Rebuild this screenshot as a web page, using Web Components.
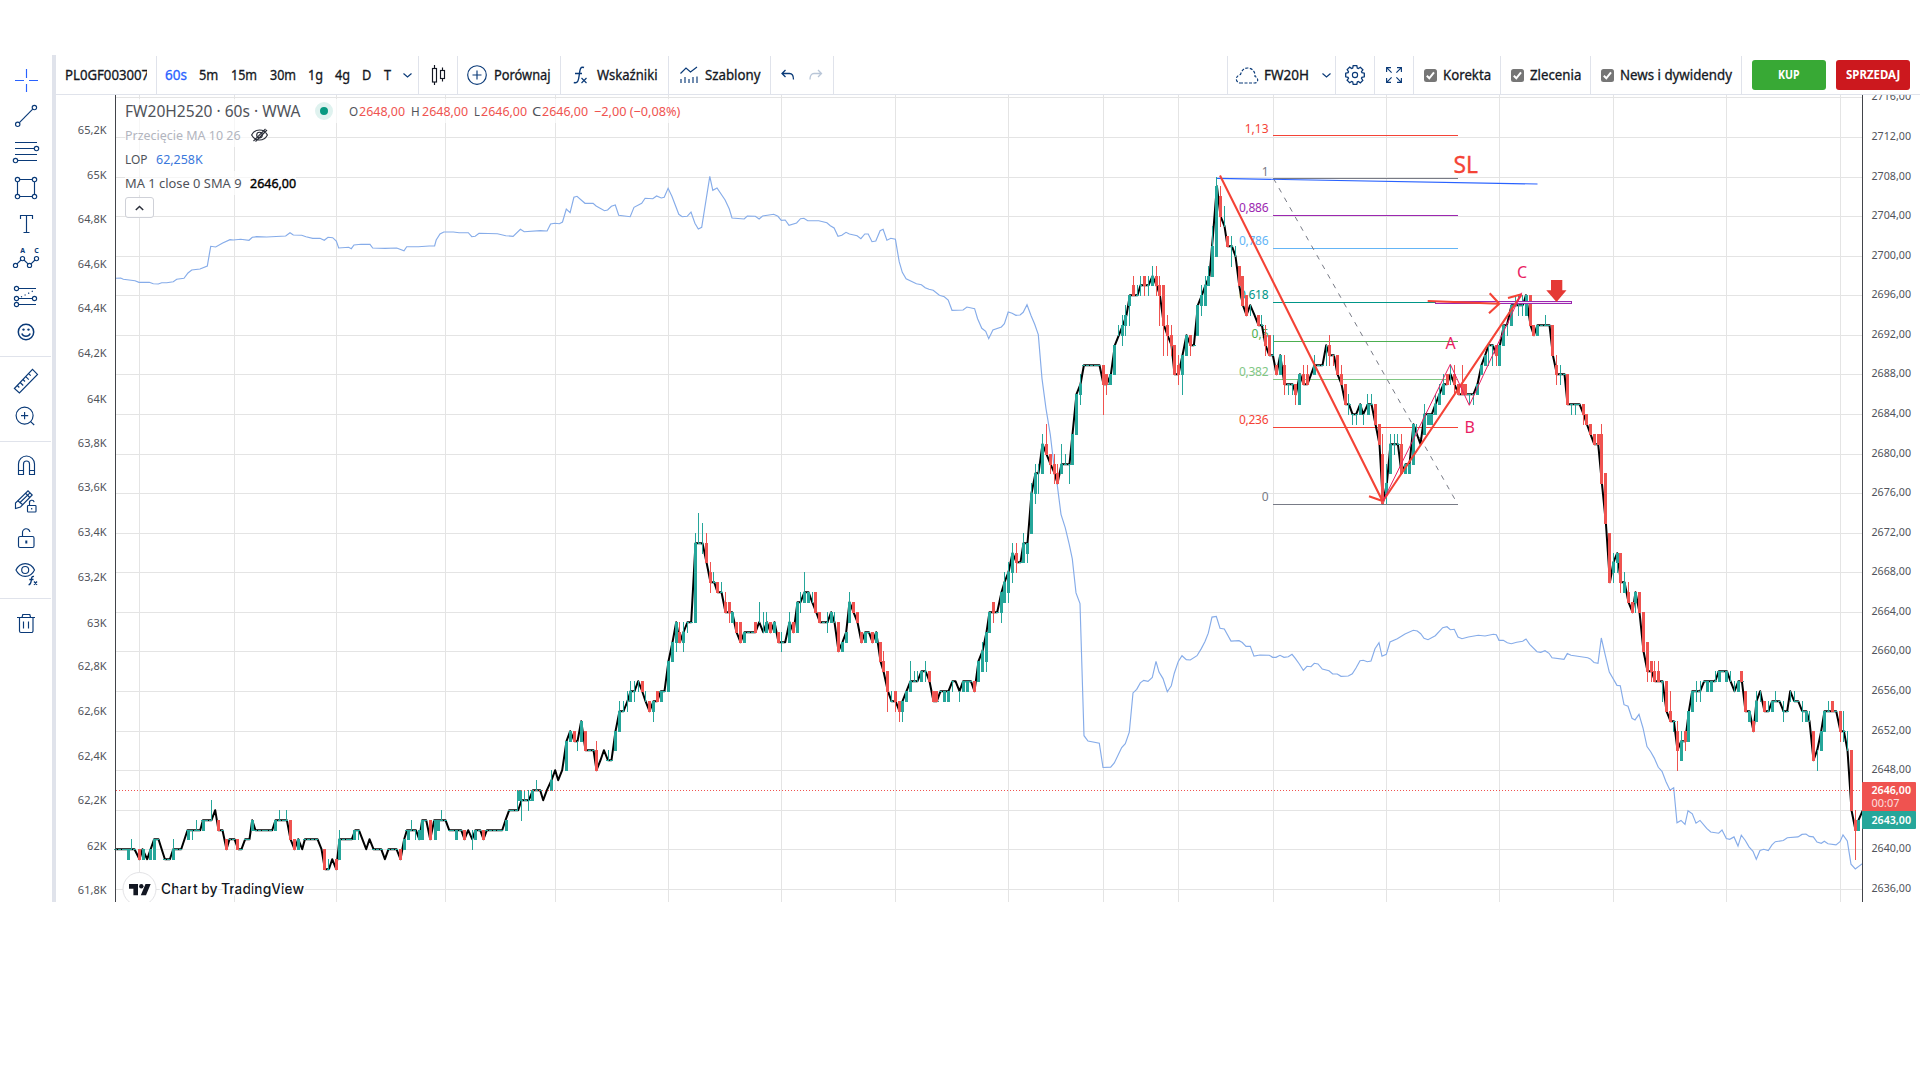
<!DOCTYPE html>
<html lang="pl">
<head>
<meta charset="utf-8">
<title>FW20H2520</title>
<style>
    html, body { margin: 0; padding: 0; background: #fff; }
    body { font-family: "Noto Sans", "Open Sans", sans-serif; color: #131722; overflow: hidden; }
</style>
</head>
<body>
<trading-app></trading-app>

<script>
function define(name, html, setup) {
    const template = document.createElement('template');
    template.innerHTML = html;
    customElements.define(name, class extends HTMLElement {
        constructor() {
            super();
            this.attachShadow({ mode: 'open' });
            this.shadowRoot.appendChild(template.content.cloneNode(true));
        }

        connectedCallback() {
            if (setup) setup.call(this, this.shadowRoot);
        }
    });
}

// Label squeezed or stretched to the width in its "w" attribute
define('ui-label', `
    <style>
        :host { display: block; flex: none; white-space: nowrap; line-height: 20px; height: 20px; }
        span { display: inline-block; transform-origin: 0 50%; }
    </style>
    <span><slot></slot></span>
`, function (root) {
    const w = parseFloat(this.getAttribute('w'));
    const span = root.querySelector('span');
    this.style.width = w + 'px';
    this.style.marginLeft = (this.getAttribute('gap') || 0) + 'px';
    span.style.transform = `scaleX(${w / span.offsetWidth})`;
});

const RAIL_ICONS = {
    cross: '<path d="M18.5 7v9M18.5 22v8M7 18.5h9M21 18.5h9" stroke="#2962ff"/>',
    line: '<path d="M11.4 24.6 24.7 11.2"/><circle cx="9.7" cy="26.3" r="2.2"/><circle cx="26.4" cy="9.5" r="2.2"/>',
    fib: '<path d="M7 8.5h22M7 14.5h19M7 20.5h22M10 26.5h19"/><circle cx="28.5" cy="14.5" r="2.2"/><circle cx="7.5" cy="26.5" r="2.2"/>',
    rect: '<path d="M12 9.5h12M12 26.5h12M9.5 12v12M26.5 12v12"/><circle cx="9.5" cy="9.5" r="2.2"/><circle cx="26.5" cy="9.5" r="2.2"/><circle cx="9.5" cy="26.5" r="2.2"/><circle cx="26.5" cy="26.5" r="2.2"/>',
    text: '<path d="M12.5 13V9.5h12V13M18.5 9.5v17M15.5 26.5h6"/>',
    abc: '<path d="M9 21.8l4-3.8M16 18l4 3.8M23 21.8l4-3.8"/><circle cx="7.5" cy="23.4" r="2.1"/><circle cx="14.5" cy="16.6" r="2.1"/><circle cx="21.5" cy="23.4" r="2.1"/><circle cx="28.5" cy="16.6" r="2.1"/><text x="12.3" y="10.8">A</text><text x="26.2" y="10.8">C</text>',
    forecast: '<path d="M11 10.5h17M11 20.5h13M11 26.5h17"/><path d="M13 19l14-7" stroke-dasharray="1.2 2.8"/><circle cx="8.5" cy="10.5" r="2.1"/><circle cx="8.5" cy="20.5" r="2.1"/><circle cx="26.5" cy="20.5" r="2.1"/><circle cx="8.5" cy="26.5" r="2.1"/>',
    smile: '<circle cx="18" cy="18" r="7.7" stroke-width="1.5"/><path d="M13.8 19.5a4.6 4.6 0 0 0 8.4 0" stroke-width="1.5"/><circle cx="15.5" cy="15.6" r="1.2" fill="#0a3a78" stroke="none"/><circle cx="20.5" cy="15.6" r="1.2" fill="#0a3a78" stroke="none"/>',
    ruler: '<path d="M6.4 25.5 24.5 6.4l5 5L11.4 30zM9.3 22.5l2 2M12.2 19.5l3 3M15 16.5l2 2M17.8 13.6l3 3M20.7 10.6l2 2"/>',
    zoom: '<circle cx="16.6" cy="16.6" r="8.5"/><path d="M22.6 22.6l3.6 3.4M16.6 13v7.2M13 16.6h7.2"/>',
    magnet: '<path d="M10.5 26.5V16a8 8 0 0 1 16 0v10.5h-5V16a3 3 0 0 0-6 0v10.5zM10.5 22.5h5M21.5 22.5h5"/>',
    pencil: '<path d="M7.5 24.5v-5.5L20 6.8l4.2 4.2L12.5 23zM9.8 16.8l5 4M11.5 19 22 8.8M17.5 9.2l4.3 4.3M7.5 24.5l5-1.5"/><rect x="19.5" y="21.5" width="8.5" height="6.5" rx=".8"/><path d="M21.5 21.5V19a2.3 2.3 0 0 1 4.6-.8M23.7 24v1.6"/>',
    lock: '<rect x="10.5" y="16.5" width="15.5" height="11" rx="1.5"/><path d="M14.5 16.5V13a3.7 3.7 0 0 1 7.4-1"/><path d="M18.3 20.5v3" stroke-width="2"/>',
    eye: '<path d="M8 14c4-8.5 14.5-8.5 18.5 0-4 8.5-14.5 8.5-18.5 0z"/><circle cx="17.2" cy="14" r="3.5"/><path d="M26 20.5c-2.6-.6-2.4 2-2.8 4.5s-.6 4-2.7 3.7M21.3 23.5h4.2M26 25.5l3 3.2M29 25.5l-3 3.2" stroke-width="1.3"/>',
    trash: '<path d="M9 12.5h18M11.5 12.5V26a1.5 1.5 0 0 0 1.5 1.5h10.5A1.5 1.5 0 0 0 25 26V12.5M14 12.5l.8-3h7l.8 3M15.5 16.5v7M20.5 16.5v7"/>'
};

define('rail-button', `
    <style>
        :host { display: block; height: 36px; padding-left: 8px; }
        svg { display: block; width: 36px; height: 36px; fill: none; stroke: #0a3a78; stroke-width: 1.15; }
        text { font: bold 7px "Noto Sans", sans-serif; fill: #0a3a78; stroke: none; }
    </style>
    <svg viewBox="0 0 36 36"></svg>
`, function (root) {
    root.querySelector('svg').innerHTML = RAIL_ICONS[this.getAttribute('icon')];
});

define('tool-rail', `
    <style>
        :host { display: block; box-sizing: border-box; width: 56px; border-right: 4px solid #e0e3eb; padding-top: 7px; }
        hr { margin: 6px 1px 6px 0; border: 0; height: 1px; background: #e0e3eb; }
    </style>
    <rail-button icon="cross"></rail-button>
    <rail-button icon="line"></rail-button>
    <rail-button icon="fib"></rail-button>
    <rail-button icon="rect"></rail-button>
    <rail-button icon="text"></rail-button>
    <rail-button icon="abc"></rail-button>
    <rail-button icon="forecast"></rail-button>
    <rail-button icon="smile"></rail-button>
    <hr>
    <rail-button icon="ruler"></rail-button>
    <rail-button icon="zoom"></rail-button>
    <hr>
    <rail-button icon="magnet"></rail-button>
    <rail-button icon="pencil"></rail-button>
    <rail-button icon="lock"></rail-button>
    <rail-button icon="eye"></rail-button>
    <hr>
    <rail-button icon="trash"></rail-button>
`);

// One cell of the top bar, closed by a separator on its right
define('bar-cell', `
    <style>
        :host { display: flex; align-items: center; box-sizing: border-box; flex: none; height: 38px; margin-top: 1px; border-right: 1px solid #e0e3eb; overflow: hidden; }
    </style>
    <slot></slot>
`, function () {
    this.style.width = this.getAttribute('w') + 'px';
    this.style.paddingLeft = (this.getAttribute('pad') || 0) + 'px';
});

define('check-box', `
    <style>
        :host { display: block; flex: none; width: 13px; height: 13px; border-radius: 2.5px; background: #767676; }
        svg { display: block; }
    </style>
    <svg width="13" height="13" viewBox="0 0 13 13"><path d="M2.8 6.8 5.3 9.3 10 3.3" fill="none" stroke="#fff" stroke-width="2"/></svg>
`);

define('order-button', `
    <style>
        :host { display: flex; flex: none; width: 74px; height: 30px; align-items: center; justify-content: center; border-radius: 3px; color: #fff; font-size: 12.5px; font-weight: 700; }
        :host([side="buy"]) { background: #38a935; margin-left: 10px; }
        :host([side="sell"]) { background: #cc181e; margin-left: 10px; }
    </style>
    <slot></slot>
`);

define('top-bar', `
    <style>
        :host { display: flex; height: 39px; border-bottom: 1px solid #e0e3eb; font-size: 13.5px; -webkit-text-stroke: .3px currentColor; }
        svg { display: block; flex: none; fill: none; stroke: #0a3a78; stroke-width: 1.15; overflow: visible; }
        .clip { width: 82px; overflow: hidden; height: 20px; }
        .spacer { flex: 1; border: 0; }
        .active { color: #2962ff; }
        .orders { display: flex; align-items: center; width: 178px; padding-top: 1px; }
        order-button { -webkit-text-stroke: 0; }
    </style>
    <bar-cell w="101" pad="9"><div class="clip"><ui-label w="84">PL0GF003007</ui-label></div></bar-cell>
    <bar-cell w="262" pad="8">
        <ui-label class="active" w="22">60s</ui-label>
        <ui-label w="19" gap="12">5m</ui-label>
        <ui-label w="26" gap="13">15m</ui-label>
        <ui-label w="26" gap="12.5">30m</ui-label>
        <ui-label w="15" gap="12">1g</ui-label>
        <ui-label w="15" gap="12">4g</ui-label>
        <ui-label w="9.5" gap="12.5">D</ui-label>
        <ui-label w="7.5" gap="12">T</ui-label>
        <svg style="margin-left:12px" width="9" height="5"><path d="M.5.5 4.5 4l4-3.5"/></svg>
    </bar-cell>
    <bar-cell w="39" pad="12">
        <svg width="15" height="20" style="stroke:#131722"><path d="M3.5 0v3M3.5 17v3M11.5 2.5v3M11.5 13.5v3"/><rect x="1.5" y="3.5" width="4" height="13.5"/><rect x="9.5" y="5.5" width="4" height="8"/></svg>
    </bar-cell>
    <bar-cell w="103" pad="9">
        <svg width="20" height="20"><circle cx="10" cy="10" r="9.3"/><path d="M10 5.5v9M5.5 10h9"/></svg>
        <ui-label w="57" gap="7">Porównaj</ui-label>
    </bar-cell>
    <bar-cell w="108" pad="12">
        <svg width="14" height="18"><path d="M11 1.5C7 0 7 4 6.3 8.5 5.6 13 5.5 18 .8 16.5M2 7.5h7" stroke-width="1.4"/><path d="M8.5 12l5 5M13.5 12l-5 5"/></svg>
        <ui-label w="61" gap="9.5">Wskaźniki</ui-label>
    </bar-cell>
    <bar-cell w="102" pad="11">
        <svg width="18" height="18"><path d="M.5 7.5 6 2l4.500 4L17 1M1 17v-4M5 17v-6M9 17v-4M13 17v-6M17 17v-6.5"/></svg>
        <ui-label w="56" gap="6.5">Szablony</ui-label>
    </bar-cell>
    <bar-cell w="63" pad="10">
        <svg width="13" height="10"><path d="M4.5 0 1 3.5 4.5 7M1 3.5h7.5c2.5 0 4 2 4 6" stroke-width="1.3"/></svg>
        <svg width="13" height="10" style="margin-left:15px;stroke:#b9c6d8"><path d="M9 0l3.5 3.5L9 7M12.5 3.5H5c-2.5 0-4 2-4 6" stroke-width="1.3"/></svg>
    </bar-cell>
    <bar-cell class="spacer" w="393" style="border-right:1px solid #e0e3eb"></bar-cell>
    <bar-cell w="108" pad="7">
        <svg width="24" height="17"><path d="M5 16h14.5c4 0 4.5-5 .5-6.5C20.5 4.5 17 1 12.500 1 8.500 1 6.5 4 5.5 7.500 0 9 0 15 5 16z" stroke-dasharray="3 1.5"/></svg>
        <ui-label w="45" gap="5">FW20H</ui-label>
        <svg style="margin-left:13px" width="9" height="5"><path d="M.5.5 4.5 4l4-3.5"/></svg>
    </bar-cell>
    <bar-cell w="39" pad="9">
        <svg width="20" height="20" viewBox="0 0 20 20"><path d="M7.7 3.1 8.2.7h3.6l.5 2.4 1 .4 2.1-1.3 2.5 2.5-1.4 2 .5 1 2.3.5v3.6l-2.4.5-.4 1 1.3 2.1-2.5 2.5-2-1.4-1 .5-.5 2.3H8.2l-.5-2.4-1-.4-2.1 1.3-2.5-2.5 1.4-2-.5-1-2.3-.5V8.2l2.4-.5.4-1-1.3-2.1 2.5-2.5 2 1.4z" stroke-width="1.3"/><circle cx="10" cy="10" r="2.6"/></svg>
    </bar-cell>
    <bar-cell w="39" pad="11">
        <svg width="16" height="16"><path d="M.6 5V.6H5M.6.6l5 5M11 .6h4.400V5M15.4.6l-5 5M.6 11v4.400H5M.6 15.4l5-5M15.4 11v4.400H11M15.4 15.4l-5-5"/></svg>
    </bar-cell>
    <bar-cell w="87" pad="10"><check-box></check-box><ui-label w="48" gap="5.5">Korekta</ui-label></bar-cell>
    <bar-cell w="90" pad="10"><check-box></check-box><ui-label w="51" gap="5.5">Zlecenia</ui-label></bar-cell>
    <bar-cell w="151" pad="10"><check-box></check-box><ui-label w="112" gap="5.5">News i dywidendy</ui-label></bar-cell>
    <div class="orders">
        <order-button side="buy"><ui-label w="22">KUP</ui-label></order-button>
        <order-button side="sell"><ui-label w="54">SPRZEDAJ</ui-label></order-button>
    </div>
`);

define('chart-legend', `
    <style>
        :host { display: block; font-size: 13px; color: #50535a; }
        .row { display: flex; align-items: center; height: 24px; width: max-content; background: rgba(255, 255, 255, .65); }
        .title { font-size: 16px; }
        .dot { width: 8px; height: 8px; border-radius: 50%; background: #089981; border: 5px solid #dff2ef; margin: 0 16px 0 15px; }
        .red { color: #ef5350; }
        .off { color: #b2b5be; }
        .blue { color: #3a78dc; }
        .val { color: #000; -webkit-text-stroke: .4px #000; }
        svg { display: block; fill: none; stroke: #2a2e39; stroke-width: 1.15; }
        button { display: flex; align-items: center; justify-content: center; width: 29px; height: 21px; margin: 2px 0 0; padding: 0; background: rgba(255, 255, 255, .8); border: 1px solid #cfd1d8; border-radius: 3px; }
    </style>
    <div class="row"><ui-label class="title" w="175">FW20H2520 · 60s · WWA</ui-label><span class="dot"></span>
        <ui-label w="9">O</ui-label><ui-label class="red" w="46" gap="1">2648,00</ui-label>
        <ui-label w="9" gap="6">H</ui-label><ui-label class="red" w="46" gap="1.5">2648,00</ui-label>
        <ui-label w="6" gap="6.5">L</ui-label><ui-label class="red" w="46" gap=".5">2646,00</ui-label>
        <ui-label w="9" gap="5.5">C</ui-label><ui-label class="red" w="46" gap=".5">2646,00</ui-label>
        <ui-label class="red" w="86" gap="6">−2,00 (−0,08%)</ui-label></div>
    <div class="row off"><ui-label w="116">Przecięcie MA 10 26</ui-label>
        <svg style="margin-left:10px" width="17" height="14"><path d="M.6 7C4 .3 13 .3 16.4 7 13 13.7 4 13.7.6 7zM2.5 13 14.5 1M4.5 13.5 16 2"/><circle cx="8.5" cy="7" r="2.8"/></svg></div>
    <div class="row"><ui-label w="23">LOP</ui-label><ui-label class="blue" w="47" gap="8">62,258K</ui-label></div>
    <div class="row"><ui-label w="117">MA 1 close 0 SMA 9</ui-label><ui-label class="val" w="46" gap="8">2646,00</ui-label></div>
    <button><svg width="9" height="6" style="stroke-width:1.5"><path d="M.8 5 4.5 1.5 8.2 5"/></svg></button>
`);

// Chart runs: x is in thirds of a pixel from x0, prices are points above 2600.
// close: x,price - up/down: x,top,bottom of the body - upWick/downWick: x,high,low
const RUNS = [
    {
        x0: 100,
        close: '46,40 103,40 118,39 127,40 141,39 162,41 175,41 194,39 209,39 219,40 243,40 262,42 300,42 308,43 334,43 345,44 355,42 367,42 379,40 388,41 403,41 414,40 424,40 435,41 448,41 456,43 466,42 516,42 526,43 560,43 571,41 583,40 594,41 606,40 614,41 652,41 664,40 674,38 686,38 696,39 708,38 718,41 755,41 765,42 776,42 798,40 808,41 820,40 843,40 854,39 865,40 889,40 901,39 912,41 920,42 947,42 957,41 966,43 978,43 990,41 1002,43 1036,43 1047,42 1083,42 1093,41 1104,42 1116,41 1126,42 1140,42 1150,41 1160,42 1206,42 1216,43 1227,44 1254,44 1264,45 1286,45',
        up: '85,40,39 130,40,39 152,40,39 163,41,39 220,40,39 266,42,41 310,43,42 457,43,42 526,43,42 595,41,40 718,41,39 764,42,41 912,41,40 924,42,41 957,42,41 966,43,41 1005,43,41 1015,43,42 1069,42,41 1126,42,41 1219,43,42',
        down: '118,40,39 355,43,42 379,41,40 412,41,40 571,43,41 583,41,40 673,40,38 709,39,38 901,40,39 991,43,41 1093,42,41 1150,42,41',
        upWick: '94,41,40 220,41,39 277,42,41 289,43,42 334,45,43 538,44,43 559,44,43 685,39,38 719,42,39 776,42,41 934,43,42 946,42,41 1024,44,43 1117,42,40 1252,46,44 1264,46,43 1273,46,45 1285,46,44'
    },
    {
        x0: 520,
        close: '38,46 60,46 69,45 80,46 94,47 105,48 114,47 126,48 139,51 150,52 163,51 172,51 183,53 196,50 220,50 229,48 241,49 251,50 263,49 274,49 286,52 298,54 310,54 322,55 331,56 343,56 354,57 366,56 376,55 388,54 400,55 411,55 422,56 433,56 445,59 457,61 468,63 479,61 490,62 502,63 513,63 526,71 547,71 559,69 571,67 582,67 592,66 604,66 616,64 636,64 649,62 661,61 673,62 706,62 717,63 729,62 740,63 751,62 763,63 775,61 795,61 808,63 820,62 832,65 841,65 853,66 865,66 876,65 888,64 899,63 922,63 933,64 943,63 955,60 967,61 978,62 988,65 1000,64 1012,63 1024,61 1035,62 1046,62 1057,61 1068,62 1081,59 1090,58 1103,56 1114,55 1126,55 1138,54 1147,55 1159,56 1171,57 1192,57 1204,58 1216,58 1228,57 1240,55 1250,55 1261,56 1285,56 1297,57 1306,57 1318,56 1329,57 1352,57 1363,56 1375,59 1387,60 1399,62 1408,64 1431,64 1444,66 1453,67 1465,68 1477,70',
        up: '-1,46,45 37,46,45 94,47,46 139,51,48 151,52,51 184,53,51 286,52,50 298,54,52 331,56,55 400,55,54 424,56,55 445,59,56 457,61,59 469,63,61 490,62,61 526,71,63 637,64,63 673,62,61 739,63,62 763,63,62 808,63,61 832,65,62 853,66,65 865,66,65 934,64,63 967,61,60 979,62,61 988,65,63 1036,62,61 1069,62,61 1147,55,54 1159,56,55 1171,57,56 1204,58,57 1273,56,55 1285,56,55 1330,57,56 1342,57,56 1375,59,57 1387,60,58 1399,62,59 1408,64,62 1444,66,64 1453,67,65 1465,68,66 1477,70,68',
        down: '163,52,51 196,52,50 229,50,48 367,57,56 388,55,54 412,56,55 478,62,61 559,71,69 571,68,67 592,67,66 616,65,64 628,65,64 649,63,62 661,63,61 706,63,62 751,63,62 775,62,61 820,63,62 886,66,64 898,64,63 955,63,60 1000,65,64 1012,64,63 1024,62,61 1057,62,61 1081,61,59 1090,59,58 1102,58,56 1126,56,55 1138,55,54 1228,58,57 1240,56,55 1249,56,55 1363,57,56 1420,65,64',
        upWick: '4,46,45 13,46,45 49,47,46 94,48,46 172,51,50 265,50,49 298,55,54 310,55,54 322,56,54 331,57,55 343,57,55 355,57,56 376,56,55 400,55,53 469,63,60 490,63,60 502,63,62 526,72,71 535,74,71 547,73,70 580,68,67 604,67,66 718,65,63 730,64,62 739,64,62 784,62,60 808,64,61 841,66,64 853,68,65 877,66,65 922,64,62 943,64,63 988,66,63 1114,56,55 1147,55,53 1171,59,56 1183,58,57 1192,58,57 1216,59,57 1297,57,56 1318,56,55 1387,61,58 1399,62,58 1444,66,63 1453,68,65 1465,69,65 1477,71,67',
        downWick: '229,51,48 478,63,61 559,72,69 571,69,66 616,66,64 628,65,63 1090,60,58 1102,58,54 1126,56,54 1138,55,53 1420,65,63'
    },
    {
        x0: 960,
        close: '169,69 181,69 190,71 202,71 214,76 226,78 235,78 247,81 259,80 271,79 283,78 292,77 304,79 328,79 337,82 349,86 361,87 371,89 418,89 430,87 440,87 452,88 464,91 476,92 488,93 499,94 509,96 532,96 541,97 565,97 577,98 589,97 599,96 611,93 622,92 634,91 643,88 655,88 667,90 679,92 691,91 701,91 713,95 725,96 736,97 748,98',
        up: '190,71,69 202,71,70 214,76,72 226,78,76 247,81,78 304,79,78 337,82,79 349,86,82 361,87,86 452,88,87 464,91,88 488,93,92 497,94,93 508,96,95 577,98,97 667,90,88 679,92,90 713,95,92 725,96,95 736,97,95',
        down: '169,70,69 259,81,80 271,80,79 283,79,78 292,78,77 430,89,87 440,88,87 520,97,96 553,98,97 589,98,97 599,97,96 611,97,93 622,93,92 634,92,91 643,91,88 655,89,88 691,92,91',
        upWick: '190,72,69 202,71,69 214,77,72 226,79,75 235,79,76 247,82,78 304,81,78 316,80,79 328,79,77 361,88,85 476,93,92 488,94,91 497,95,92 508,96,93 532,97,96 541,98,96 565,98,96 577,99,97 667,90,86 679,92,90 725,97,94 736,98,95',
        downWick: '169,71,68 259,83,80 271,80,78 283,80,77 292,79,77 430,89,84 440,88,86 520,98,96 553,98,96 589,99,96 599,98,93 611,97,90 622,94,90 634,93,90 643,91,88 655,90,87 691,92,90'
    },
    {
        x0: 1200,
        close: '38,102 50,107 61,104 73,103 82,101 95,101 106,100 117,97 128,95 139,94 150,95 163,94 175,93 185,93 196,91 207,90 218,90 229,88 240,90 253,87 277,87 287,86 299,88 310,87 322,87 333,88 343,89 367,89 378,91 388,90 401,90 412,88 424,87 436,85 446,85 457,84 468,84 480,85 489,84 503,85 514,85 526,83 538,81 548,75 560,77 571,81 593,81 604,78 616,79 628,79 640,83 650,82 661,81 673,84 695,84 706,85 718,86 730,87 741,87 751,88 763,87 775,86 820,86 832,87 844,89 855,90 865,91 878,91 888,90 899,91 911,93 920,93 934,95 968,95 977,96 991,93 1001,92 1012,93 1048,93 1058,90 1070,88 1093,88 1102,85 1138,85',
        up: '16,97,95 26,98,97 38,101,98 50,107,100 241,90,88 298,88,85 343,89,88 482,85,84 504,85,84 559,77,76 571,81,78 616,79,78 628,79,78 640,83,79 673,84,82 685,84,83 694,84,83 706,85,84 718,86,85 730,87,86 832,87,86 844,89,88 856,90,89 898,91,89 910,93,91 934,95,93 979,96,94 1012,93,92',
        down: '61,106,104 82,102,101 118,99,97 127,98,95 139,96,94 175,94,93 196,92,91 208,92,90 229,89,88 253,89,87 286,87,86 310,88,87 322,88,87 388,91,90 412,90,88 424,88,87 436,87,85 526,85,83 538,83,81 547,80,75 604,81,78 742,88,87 763,88,87 775,87,86 787,87,86 796,87,86 889,91,90 991,96,93 1000,93,92 1057,93,90 1069,89,88 1102,88,85',
        upWick: '16,98,95 26,99,97 38,103,98 50,108,100 73,105,103 95,102,99 106,101,100 151,95,94 184,94,93 220,92,90 265,87,86 277,87,86 343,90,88 379,91,89 446,86,84 457,84,83 468,84,83 490,84,83 503,86,84 514,86,85 559,79,75 571,82,78 583,82,80 592,82,81 649,83,82 673,85,82 706,86,84 718,87,85 730,88,86 751,89,87 808,86,85 820,86,85 865,91,89 877,91,89 922,93,92 945,96,95 956,96,94 968,96,94 1036,94,93 1081,89,87 1114,85,84 1126,85,84',
        downWick: '61,107,103 175,94,93 196,93,90 253,90,86 286,87,85 310,89,87 322,89,87 388,92,89 400,90,89 424,89,87 547,82,75 604,82,78 763,89,86 787,89,86 889,91,89 1069,90,87'
    },
    {
        x0: 1560,
        close: '70,84 80,83 91,82 102,81 114,81 125,77 137,73 149,67 160,69 171,70 182,67 193,67 205,65 217,64 226,66 238,64 250,60 262,58 274,58 284,57 307,57 319,54 331,53 341,53 352,50 363,51 375,51 386,54 396,56 420,56 432,57 465,57 476,58 500,58 511,57 523,56 535,57 545,57 556,54 568,54 580,52 589,55 600,56 613,54 625,54 636,55 658,55 670,54 681,54 690,56 702,55 714,55 726,54 739,54 748,53 760,49 771,50 783,52 793,54 828,54 841,52 851,52 862,50 874,44 886,42 895,43 908,44',
        up: '160,69,68 172,70,69 193,67,66 226,66,65 364,51,49 386,54,51 397,56,54 442,57,56 454,57,56 478,58,57 499,58,57 535,57,56 568,54,53 589,55,53 637,55,54 739,54,53 784,52,50 793,54,52 895,43,42',
        down: '70,85,84 79,84,83 91,83,82 103,82,81 115,82,81 124,82,77 136,78,73 148,72,67 181,70,67 205,66,65 217,65,64 238,66,64 250,64,60 262,61,58 274,59,58 283,58,57 295,58,57 319,57,54 331,54,53 352,52,50 376,52,51 544,58,57 556,56,54 580,53,52 613,55,54 760,52,49 817,55,54 841,54,52 874,50,44 886,43,42',
        upWick: '34,85,84 46,85,84 160,70,67 172,70,68 193,68,66 226,66,64 307,57,55 341,53,52 364,52,49 409,57,55 421,57,55 466,58,57 511,58,57 523,57,56 589,56,53 600,56,55 625,55,54 646,56,55 670,55,53 690,56,55 703,56,55 727,55,53 748,54,53 772,50,48 805,55,54 850,54,51 862,52,50',
        downWick: '70,85,83 124,83,77 181,70,66 205,67,65 262,61,57 274,59,57 283,59,57 295,59,57 331,56,53 352,53,48 376,52,50 841,54,51 886,44,39'
    }
];

// Open interest curve: x0, y0 in pixels, x and y scale, then points
const LOP = [
    [0, 50, 3, 3, '347,685 362,684 370,688 405,692 417,697 448,697 460,701 475,702 485,698 500,698 520,695 530,688 552,685 564,669 575,660 600,657 622,648 632,589 647,591 668,579 690,569 700,570 722,568 747,571 757,562 770,560 800,561 857,558 870,548 880,555 905,556 918,560 938,565 960,565 973,571 984,562 998,563 1009,573 1016,594 1046,592 1054,596 1062,585 1083,583 1110,583 1118,594 1155,595 1190,594 1212,602 1220,590 1255,590'],
    [440, 160, 2.6133, 3, '-28,258 -14,258 -10,240 0,222 10,216 35,216 50,218 74,218 83,230 92,229 102,220 150,221 172,227 191,229 210,208 220,215 262,212 280,213 289,192 300,190 312,191 320,186 330,147 340,158 350,112 358,109 379,130 400,130 408,138 430,152 438,150 448,139 458,135 467,166 497,170 507,142 527,130 536,115 556,116 566,108 578,114 586,112 596,85 606,109 624,163 633,170 646,169 656,156 666,190 675,207 684,202 705,49 713,91 724,84 745,120 756,147 763,174 795,177 803,168 824,169 834,177 843,168 872,163 883,169 892,181 902,180 912,196 932,189 942,176 951,175 961,182 990,182 1011,188 1020,197 1030,204 1040,229 1050,226 1061,217 1070,222 1090,227 1100,236 1110,222 1119,222 1129,245 1139,243 1150,212 1158,208 1168,241 1178,235 1190,238 1200,305 1208,337 1218,356 1245,371 1258,374 1268,383 1278,388 1289,391 1305,406 1318,410 1328,420 1338,451 1367,450 1377,441 1397,446 1405,476 1416,505 1426,514 1434,536 1445,510 1467,501 1475,491 1485,456 1495,460 1505,466 1516,465 1524,457 1534,434 1545,468 1554,493'],
    [960, 240, 3, 2.8, '235,265 246,388 258,472 271,545 283,640 292,687 303,768 316,806 328,853 337,893 348,988 360,1018 372,1388 384,1403 418,1409 429,1477 452,1476 463,1464 485,1421 496,1410 508,1378 519,1268 530,1258 541,1240 551,1233 564,1236 577,1225 588,1180 597,1210 609,1228 622,1265 634,1248 643,1213 655,1180 666,1164 679,1175 691,1176 711,1164 724,1144 735,1124 745,1101 756,1056 769,1054 780,1087 793,1089 813,1123 837,1122 847,1127 858,1138 871,1138 882,1165'],
    [1260, 600, 3, 3, '0,165 28,166 38,172 48,172 60,166 72,172 85,170 96,163 106,175 118,192 130,211 141,199 153,200 163,190 174,192 187,207 207,212 218,222 232,222 243,229 265,228 277,221 288,204 300,182 310,181 322,185 333,183 345,146 357,128 366,169 379,163 390,126 412,116 435,102 460,91 472,93 482,101 492,115 504,119 526,107 548,83 561,80 571,89 583,88 594,111 606,116 625,111 655,106 675,108 700,103 709,104 717,121 730,121 742,128 754,131 770,127 788,124 798,117 809,133 831,155 842,157 855,152 867,160 876,173 912,178'],
    [1560, 280, 3, 2.489, '22,930 33,934 83,940 91,943 102,952 114,954 124,891 136,934 148,976 171,1009 181,1010 192,1057 204,1061 216,1091 225,1095 237,1081 249,1115 261,1161 272,1174 283,1190 295,1213 306,1223 318,1249 330,1270 341,1264 351,1351 363,1345 375,1355 384,1321 397,1329 408,1352 420,1345 440,1365 452,1374 476,1377 486,1369 499,1390 509,1392 522,1386 534,1409 544,1382 556,1395 567,1411 579,1422 589,1442 600,1420 611,1417 625,1420 636,1406 646,1398 670,1395 682,1388 714,1386 726,1380 738,1379 748,1385 760,1386 771,1399 784,1402 793,1397 804,1403 828,1406 840,1398 849,1381 862,1396 873,1454 886,1466 908,1452']
];

const FIB = [
    ['1,13', 135, '#f44336', 128], ['1', 178, '#787b86', 171], ['0,886', 215, '#9c27b0', 207.5],
    ['0,786', 248, '#64b5f6', 240.5], ['0,618', 302, '#009688', 294.5], ['0,5', 341, '#4caf50', 333.5],
    ['0,382', 379, '#81c784', 371.5], ['0,236', 427, '#f44336', 419.5], ['0', 504, '#787b86', 496.5]
];

const LEFT_SCALE = [
    ['65,2K', 130], ['65K', 175], ['64,8K', 219], ['64,6K', 264], ['64,4K', 308], ['64,2K', 353],
    ['64K', 399], ['63,8K', 443], ['63,6K', 487], ['63,4K', 532], ['63,2K', 577], ['63K', 623],
    ['62,8K', 666], ['62,6K', 711], ['62,4K', 756], ['62,2K', 800], ['62K', 846], ['61,8K', 890]
];

const UP = '#26a69a';
const DOWN = '#ef5350';
const row = price => Math.round(97.43 + 9.894 * (116 - price));
const parse = text => (text || '').split(' ').filter(Boolean).map(t => t.split(',').map(Number));

function drawGrid() {
    let d = '';
    for (let p = 116; p >= 36; p -= 4) d += `M116 ${row(p) + .5}H1862`;
    for (const x of [139, 234, 336, 445, 555, 668, 781, 895, 1008, 1103, 1178, 1273, 1386, 1499, 1613, 1726, 1840]) {
        d += `M${x + .5} 95V902`;
    }
    return `<path d="${d}" stroke="#e4e4e4" fill="none"/>`;
}

function drawLop() {
    const pts = [];
    for (const [x0, y0, sx, sy, text] of LOP) {
        for (const [x, y] of parse(text)) pts.push((x0 + x / sx).toFixed(1) + ',' + (y0 + y / sy).toFixed(1));
    }
    return `<polyline points="${pts.join(' ')}" fill="none" stroke="#86ace9" stroke-width="1.15"/>`;
}

function drawCandles() {
    const line = [];
    let bodies = '', ticks = '';
    for (const run of RUNS) {
        const px = x => Math.floor(run.x0 + x / 3);
        for (const [x, p] of parse(run.close)) line.push([run.x0 + x / 3 + .2, p]);
        const wick = (list, color) => parse(list).forEach(([x, a, b]) => {
            bodies += `<rect x="${px(x)}" y="${row(a)}" width="1" height="${row(b) - row(a) + 1}" fill="${color}"/>`;
        });
        const body = (list, color) => parse(list).forEach(([x, a, b]) => {
            bodies += `<rect x="${px(x) - 1}" y="${row(a)}" width="3" height="${row(b) - row(a) + 1}" fill="${color}"/>`;
        });
        wick(run.upWick, UP);
        wick(run.downWick, DOWN);
        body(run.up, UP);
        body(run.down, DOWN);
    }
    // unchanged minutes are one-pixel ticks over the average
    for (let i = 1; i < line.length; i++) {
        if (line[i][1] !== line[i - 1][1]) continue;
        for (let x = line[i - 1][0]; x <= line[i][0] + .5; x += 3.775) {
            ticks += `<rect x="${Math.floor(x) - 1}" y="${row(line[i][1])}" width="3" height="1" fill="${UP}"/>`;
        }
    }
    const points = line.map(([x, p]) => x.toFixed(1) + ',' + (row(p) + .2)).join(' ');
    return `<polyline points="${points}" fill="none" stroke="#000" stroke-width="2" stroke-linejoin="round"/>` + ticks + bodies;
}

function drawFib() {
    return FIB.map(([label, y, color, ty]) => `
        <path d="M1273 ${y + .5}H1458" stroke="${color}"/>
        <text x="1268.5" y="${ty + 4.5}" text-anchor="end" font-size="12" fill="${color}"${label.length > 4 ? ' textLength="29.5"' : ''}>${label}</text>`).join('')
        + '<path d="M1273.5 178.5 1457 503" stroke="#787b86" stroke-dasharray="5 6"/>';
}

function drawTools() {
    return `
        <path d="M1217 178.3 1537.5 184" stroke="#2962ff" stroke-width="1.2"/>
        <rect x="1435.5" y="301.5" width="136" height="2" fill="#f3e5f5" stroke="#9c27b0"/>
        <g fill="none" stroke="#f44336" stroke-width="2.1">
            <path d="M1220 175.5 1382.5 501M1369 496.3 1382.5 501"/>
            <path d="M1383 501 1521.7 294.3M1508 298 1521.7 294.3"/>
            <path d="M1427.7 301 1499.3 303.7M1489.7 293.3 1499.3 303.7 1489 313.3"/>
        </g>
        <path d="M1383 501 1450.3 364.3 1469.3 405.3 1521.7 292.7" fill="none" stroke="#e91e63"/>
        <g fill="#e91e63" font-size="16" text-anchor="middle">
            <text x="1450.7" y="349">A</text><text x="1469.7" y="432.5">B</text><text x="1522" y="277.5">C</text>
        </g>
        <text x="1453.5" y="172.7" font-size="23" textLength="24.5" lengthAdjust="spacingAndGlyphs" fill="#f44336" stroke="#f44336" stroke-width=".3">SL</text>
        <path d="M1551 280h11.3v10.3h4.2L1556.5 302l-10.2-11.7h4.7z" fill="#e53935"/>`;
}

function drawScales() {
    let out = '<path d="M115.5 95V902M1862.5 95V902" stroke="#42444a"/><g fill="#50535a" font-size="11">';
    for (const [label, y] of LEFT_SCALE) out += `<text x="106.5" y="${y + 4}" text-anchor="end">${label}</text>`;
    for (let p = 116; p >= 36; p -= 4) {
        if (p === 44) continue;
        out += `<text x="1871.5" y="${row(p) + 3}" textLength="39.5" lengthAdjust="spacingAndGlyphs">${2600 + p},00</text>`;
    }
    return out + `</g>
        <rect x="1862" y="782" width="54" height="30" rx="1" fill="${DOWN}"/>
        <rect x="1862" y="811" width="54" height="18" rx="1" fill="${UP}"/>
        <g fill="#fff" font-size="11">
            <text x="1871.5" y="794" font-weight="600" textLength="39.5" lengthAdjust="spacingAndGlyphs">2646,00</text>
            <text x="1871.5" y="807" opacity=".8" textLength="28" lengthAdjust="spacingAndGlyphs">00:07</text>
            <text x="1871.5" y="824" font-weight="600" textLength="39.5" lengthAdjust="spacingAndGlyphs">2643,00</text>
        </g>`;
}

define('price-chart', `
    <style>
        :host { display: block; position: relative; height: 807px; overflow: hidden; }
        svg { display: block; }
        text { font-family: "Noto Sans", sans-serif; }
        .brand { font-family: Inter, sans-serif; font-weight: 500; }
        chart-legend { position: absolute; left: 69px; top: 4px; }
    </style>
    <svg width="1864" height="807" viewBox="56 95 1864 807"></svg>
    <chart-legend></chart-legend>
`, function (root) {
    root.querySelector('svg').innerHTML = drawGrid() + drawLop() + drawFib() + drawCandles()
        + `<path d="M116 790.5H1862" stroke="${DOWN}" stroke-dasharray="1 2"/>`
        + drawTools() + drawScales() + `
        <circle cx="139.5" cy="889" r="16.5" fill="#fff" stroke="#e3e3e6"/>
        <path d="M129 884h9v11.3h-4.6v-6.5H129zM145.5 884h5.2l-4.7 11.3h-5.2z" fill="#131722"/>
        <circle cx="141.3" cy="886.3" r="2.2" fill="#131722"/>
        <text class="brand" x="161" y="894" font-size="14" textLength="143" fill="#131722" stroke="#fff" stroke-width="4" paint-order="stroke">Chart by TradingView</text>`;
});

define('trading-app', `
    <style>
        :host { display: flex; margin-top: 55px; width: 1920px; height: 847px; overflow: hidden; }
        main { flex: 1; min-width: 0; }
    </style>
    <tool-rail></tool-rail>
    <main>
        <top-bar></top-bar>
        <price-chart></price-chart>
    </main>
`);
</script>
</body>
</html>
